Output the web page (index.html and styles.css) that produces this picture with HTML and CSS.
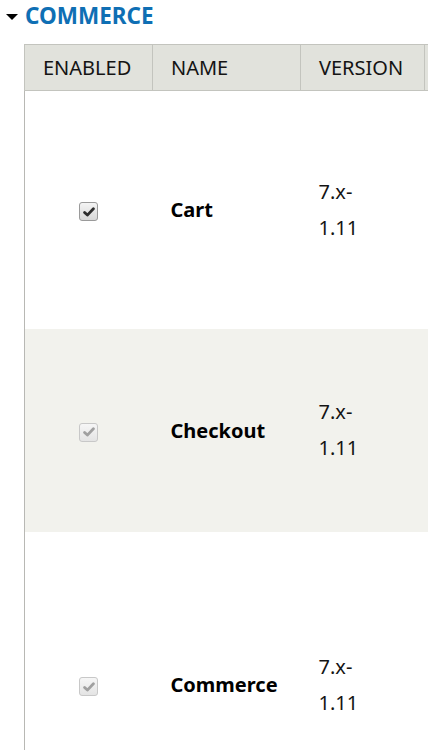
FILE: index.html
```html
<!DOCTYPE html>
<html lang="en">
<head>
  <meta charset="UTF-8" />
  <meta name="viewport" content="width=device-width, initial-scale=1" />
  <title>Modules - Commerce</title>
  <link rel="stylesheet" href="styles.css">
</head>
<body>

  <div class="package">
    <h2 class="package-title"><span class="arrow"></span>COMMERCE</h2>

    <div class="package-body">
      <table class="modules">
        <thead>
          <tr>
            <th class="col-enabled">Enabled</th>
            <th class="col-name">Name</th>
            <th class="col-version">Version</th>
            <th class="col-desc"></th>
          </tr>
        </thead>
        <tbody>
          <tr class="row-cart">
            <td class="enabled">
              <span class="check">
                <svg viewBox="0 0 12 12" width="12" height="12"><path d="M1.6 6.4 L4.4 9.1 L10.4 2.8" fill="none" stroke-width="2.8" stroke-linecap="round" stroke-linejoin="round"/></svg>
              </span>
            </td>
            <td class="name">Cart</td>
            <td class="version"><span>7.x-1.11</span></td>
            <td class="desc"></td>
          </tr>
          <tr class="row-checkout even">
            <td class="enabled">
              <span class="check disabled">
                <svg viewBox="0 0 12 12" width="12" height="12"><path d="M1.6 6.4 L4.4 9.1 L10.4 2.8" fill="none" stroke-width="2.8" stroke-linecap="round" stroke-linejoin="round"/></svg>
              </span>
            </td>
            <td class="name">Checkout</td>
            <td class="version"><span>7.x-1.11</span></td>
            <td class="desc"></td>
          </tr>
          <tr class="row-commerce">
            <td class="enabled">
              <span class="check disabled">
                <svg viewBox="0 0 12 12" width="12" height="12"><path d="M1.6 6.4 L4.4 9.1 L10.4 2.8" fill="none" stroke-width="2.8" stroke-linecap="round" stroke-linejoin="round"/></svg>
              </span>
            </td>
            <td class="name">Commerce</td>
            <td class="version"><span>7.x-1.11</span></td>
            <td class="desc"></td>
          </tr>
        </tbody>
      </table>
    </div>
  </div>

</body>
</html>
```

FILE: styles.css
```css
body {
  margin: 0;
  padding: 0;
  background-color: #ffffff;
  color: #000000;
  font-family: 'Noto Sans', 'Open Sans', sans-serif;
  overflow: hidden;
}

.package-title {
  margin: 0;
  height: 44px;
  padding-left: 6px;
  display: flex;
  align-items: flex-start;
  color: #0f6fb4;
  font-size: 22.5px;
  font-weight: bold;
  line-height: 31px;
}

.arrow {
  width: 0;
  height: 0;
  margin-top: 14px;
  margin-right: 7px;
  border-left: 6px solid transparent;
  border-right: 6px solid transparent;
  border-top: 6px solid #000000;
}

.package-body {
  margin-left: 24px;
  border-left: 1px solid #b8b8b4;
  min-height: 706px;
}

.modules {
  border-collapse: collapse;
  width: 560px;
  table-layout: fixed;
  margin-left: -1px;
}

.modules th,
.modules td {
  box-sizing: border-box;
}

.modules th {
  background-color: #e1e2dc;
  border: 1px solid #c3c4be;
  height: 46px;
  padding: 0 0 0 18px;
  text-align: left;
  font-weight: normal;
  font-size: 20px;
  text-transform: uppercase;
  color: #141414;
}

.col-enabled { width: 128px; }
.col-name { width: 148px; }
.col-version { width: 124px; }
.col-desc { width: 160px; }

.modules td {
  padding: 0 0 0 18px;
  vertical-align: middle;
  font-size: 20px;
}

.row-cart { height: 238px; }
.row-checkout { height: 203px; }
.row-commerce { height: 306px; }

.even td {
  background-color: #f2f2ed;
}

td.enabled {
  padding: 0;
  text-align: center;
}

.check {
  display: inline-flex;
  align-items: center;
  justify-content: center;
  width: 17px;
  height: 17px;
  border: 1px solid #9a9a9a;
  border-radius: 3px;
  background: linear-gradient(#f4f4f4, #d8d8d8);
  vertical-align: middle;
}

.check svg {
  stroke: #2e2e2e;
}

.check.disabled {
  border-color: #c8c8c8;
  background: linear-gradient(#f6f6f6, #e4e4e4);
}

.check.disabled svg {
  stroke: #a0a0a0;
}

td.name {
  font-weight: bold;
}

td.version span {
  display: block;
  width: 50px;
  line-height: 36px;
  color: #141414;
}
```
